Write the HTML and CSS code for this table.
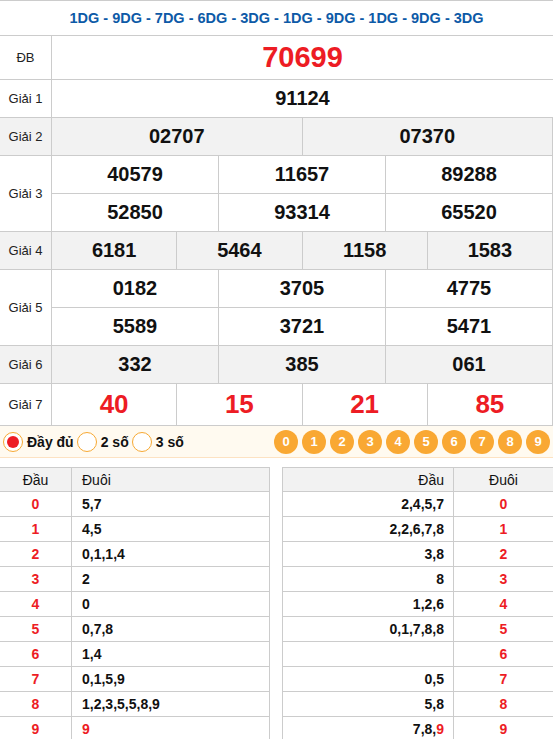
FILE: index.html
```html
<!DOCTYPE html>
<html lang="vi">
<head>
<meta charset="utf-8">
<title>Kết quả xổ số</title>
<link rel="stylesheet" href="styles.css">
</head>
<body>
<div class="kq">
  <div class="c head s13">1DG - 9DG - 7DG - 6DG - 3DG - 1DG - 9DG - 1DG - 9DG - 3DG</div>

  <div class="c l r-db">ĐB</div>
  <div class="c n s12 red db r-db">70699</div>

  <div class="c l">Giải 1</div>
  <div class="c n s12">91124</div>

  <div class="c l g">Giải 2</div>
  <div class="c n s6 g">02707</div>
  <div class="c n s6 g">07370</div>

  <div class="c l span2">Giải 3</div>
  <div class="c n s4">40579</div>
  <div class="c n s4">11657</div>
  <div class="c n s4">89288</div>
  <div class="c n s4">52850</div>
  <div class="c n s4">93314</div>
  <div class="c n s4">65520</div>

  <div class="c l g">Giải 4</div>
  <div class="c n s3 g">6181</div>
  <div class="c n s3 g">5464</div>
  <div class="c n s3 g">1158</div>
  <div class="c n s3 g">1583</div>

  <div class="c l span2">Giải 5</div>
  <div class="c n s4">0182</div>
  <div class="c n s4">3705</div>
  <div class="c n s4">4775</div>
  <div class="c n s4">5589</div>
  <div class="c n s4">3721</div>
  <div class="c n s4">5471</div>

  <div class="c l g">Giải 6</div>
  <div class="c n s4 g">332</div>
  <div class="c n s4 g">385</div>
  <div class="c n s4 g">061</div>

  <div class="c l">Giải 7</div>
  <div class="c n s3 red g7">40</div>
  <div class="c n s3 red g7">15</div>
  <div class="c n s3 red g7">21</div>
  <div class="c n s3 red g7">85</div>
</div>

<div class="bar">
  <div class="opts">
    <span class="radio on"></span><span class="opt">Đầy đủ</span>
    <span class="radio"></span><span class="opt">2 số</span>
    <span class="radio"></span><span class="opt">3 số</span>
  </div>
  <div class="balls">
    <span class="ball">0</span><span class="ball">1</span><span class="ball">2</span><span class="ball">3</span><span class="ball">4</span><span class="ball">5</span><span class="ball">6</span><span class="ball">7</span><span class="ball">8</span><span class="ball">9</span>
  </div>
</div>

<div class="lotos">
  <div class="lt left">
    <div class="row hd"><div class="a">Đầu</div><div class="b">Đuôi</div></div>
    <div class="row"><div class="a red">0</div><div class="b">5,7</div></div>
    <div class="row"><div class="a red">1</div><div class="b">4,5</div></div>
    <div class="row"><div class="a red">2</div><div class="b">0,1,1,4</div></div>
    <div class="row"><div class="a red">3</div><div class="b">2</div></div>
    <div class="row"><div class="a red">4</div><div class="b">0</div></div>
    <div class="row"><div class="a red">5</div><div class="b">0,7,8</div></div>
    <div class="row"><div class="a red">6</div><div class="b">1,4</div></div>
    <div class="row"><div class="a red">7</div><div class="b">0,1,5,9</div></div>
    <div class="row"><div class="a red">8</div><div class="b">1,2,3,5,5,8,9</div></div>
    <div class="row"><div class="a red">9</div><div class="b red">9</div></div>
  </div>
  <div class="lt right">
    <div class="row hd"><div class="a">Đầu</div><div class="b">Đuôi</div></div>
    <div class="row"><div class="a">2,4,5,7</div><div class="b red">0</div></div>
    <div class="row"><div class="a">2,2,6,7,8</div><div class="b red">1</div></div>
    <div class="row"><div class="a">3,8</div><div class="b red">2</div></div>
    <div class="row"><div class="a">8</div><div class="b red">3</div></div>
    <div class="row"><div class="a">1,2,6</div><div class="b red">4</div></div>
    <div class="row"><div class="a">0,1,7,8,8</div><div class="b red">5</div></div>
    <div class="row"><div class="a"></div><div class="b red">6</div></div>
    <div class="row"><div class="a">0,5</div><div class="b red">7</div></div>
    <div class="row"><div class="a">5,8</div><div class="b red">8</div></div>
    <div class="row"><div class="a">7,8,<span class="red">9</span></div><div class="b red">9</div></div>
  </div>
</div>
</body>
</html>
```

FILE: styles.css
```css
* { box-sizing: border-box; }
body {
  margin: 0;
  width: 553px;
  font-family: "Liberation Sans", Arial, sans-serif;
  color: #111;
  background: #fff;
}
.kq {
  display: grid;
  grid-template-columns: 52px repeat(12, 1fr);
  grid-template-rows: 35px 44px 38px 38px 38px 38px 38px 38px 38px 38px 42px;
  border-top: 1px solid #ccc;
}
.c {
  display: flex;
  align-items: center;
  justify-content: center;
  border-bottom: 1px solid #ccc;
  border-right: 1px solid #ccc;
}
.c:last-child, .s12 { }
.head {
  grid-column: 1 / -1;
  border-right: 0;
  color: #0d5aa7;
  font-weight: bold;
  font-size: 14.5px;
}
.l {
  font-size: 13px;
  color: #222;
}
.span2 { grid-row: span 2; }
.s12 { grid-column: span 12; border-right: 0; }
.s6 { grid-column: span 6; }
.s4 { grid-column: span 4; }
.s3 { grid-column: span 3; }
.n {
  font-weight: bold;
  font-size: 20px;
  color: #111;
}
.g { background: #f2f2f2; }
.red { color: #ed1c24; }
.n.red { color: #ed1c24; }
.db { font-size: 29px; }
.g7 { font-size: 26px; }

.bar {
  height: 32px;
  background: #fffaf0;
  border-bottom: 1px solid #fde2c2;
  display: flex;
  align-items: center;
  justify-content: space-between;
  padding: 0 3px 0 3px;
}
.opts {
  display: flex;
  align-items: center;
}
.radio {
  width: 20px;
  height: 20px;
  border-radius: 50%;
  border: 1px solid #f7a933;
  background: #fff;
  display: flex;
  align-items: center;
  justify-content: center;
}
.radio.on::after {
  content: "";
  width: 12px;
  height: 12px;
  border-radius: 50%;
  background: #ed1c24;
}
.opt {
  font-weight: bold;
  font-size: 14px;
  margin: 0 3px 0 4px;
  color: #111;
}
.balls {
  display: flex;
  gap: 4px;
}
.ball {
  width: 24px;
  height: 24px;
  border-radius: 50%;
  background: #f9a833;
  color: #fff;
  font-weight: bold;
  font-size: 13px;
  display: flex;
  align-items: center;
  justify-content: center;
}

.lotos {
  display: flex;
  justify-content: space-between;
  margin-top: 9px;
}
.lt {
  border-top: 1px solid #ccc;
}
.lt.left { width: 270px; border-right: 1px solid #ccc; }
.lt.right { width: 271px; border-left: 1px solid #ccc; }
.row {
  display: flex;
  height: 25px;
  border-bottom: 1px solid #ccc;
  font-size: 14px;
  font-weight: bold;
}
.row.hd {
  height: 24px;
  background: #f2f2f2;
  font-weight: normal;
  font-size: 14px;
}
.row > div {
  display: flex;
  align-items: center;
}
.left .a {
  width: 72px;
  justify-content: center;
  border-right: 1px solid #ccc;
}
.left .b {
  flex: 1;
  padding-left: 10px;
}
.right .a {
  width: 171px;
  justify-content: flex-end;
  padding-right: 9px;
  border-right: 1px solid #ccc;
}
.right .b {
  flex: 1;
  justify-content: center;
}
```
